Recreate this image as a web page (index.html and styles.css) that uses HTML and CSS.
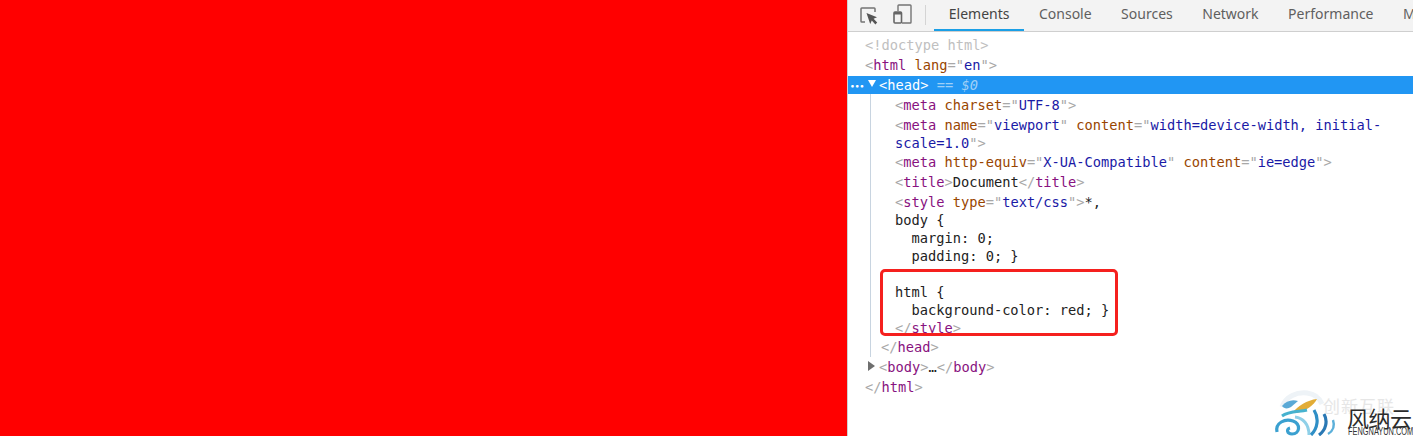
FILE: index.html
```html
<!DOCTYPE html>
<html lang="en">
<head>
<meta charset="UTF-8">
<title>Document</title>
<link rel="stylesheet" href="styles.css">
</head>
<body>
<main class="viewport"></main>
<section class="devtools">
  <header class="toolbar">
    <div class="tool-icons">
      <svg class="icon-inspect" width="18" height="18" viewBox="0 0 18 18" fill="none"><path d="M5 15H1.8Q1 15 1 14.2V1.8Q1 1 1.8 1H14.2Q15 1 15 1.8V5" stroke="#747474" stroke-width="1.5"/><path d="M6.5 6L17 10.2L13.6 11.8L17.2 15.6L15.4 17.4L11.8 13.6L10.2 17Z" fill="#555"/></svg>
      <svg class="icon-device" width="19" height="20" viewBox="0 0 19 20" fill="none"><path d="M5 7V1.8Q5 1 5.8 1H17.2Q18 1 18 1.8V18.2Q18 19 17.2 19H9" stroke="#747474" stroke-width="1.4"/><rect x="1" y="8" width="7.5" height="11" rx="1" stroke="#666" stroke-width="1.6"/><rect x="1" y="8" width="7.5" height="2.5" fill="#666"/></svg>
    </div>
    <span class="divider"></span>
    <nav class="tabs">
      <span class="tab active">Elements</span>
      <span class="tab">Console</span>
      <span class="tab">Sources</span>
      <span class="tab">Network</span>
      <span class="tab">Performance</span>
      <span class="tab">Memory</span>
    </nav>
  </header>
  <div class="tree">
    <div class="guide"></div>
    <pre class="node root doctype">&lt;!doctype html&gt;</pre>
    <pre class="node root"><b>&lt;</b><i>html</i> <u>lang</u><b>=</b><b>"</b><s>en</s><b>"</b><b>&gt;</b></pre>
    <div class="node selected"><span class="dots">•••</span><span class="arrow-down"></span><pre class="selected-text">&lt;head&gt;<em> == $0</em></pre></div>
    <pre class="node child"><b>&lt;</b><i>meta</i> <u>charset</u><b>="</b><s>UTF-8</s><b>"&gt;</b></pre>
    <pre class="node child tight"><b>&lt;</b><i>meta</i> <u>name</u><b>="</b><s>viewport</s><b>"</b> <u>content</u><b>="</b><s>width=device-width, initial-</s>
<s>scale=1.0</s><b>"&gt;</b></pre>
    <pre class="node child"><b>&lt;</b><i>meta</i> <u>http-equiv</u><b>="</b><s>X-UA-Compatible</s><b>"</b> <u>content</u><b>="</b><s>ie=edge</s><b>"&gt;</b></pre>
    <pre class="node child"><b>&lt;</b><i>title</i><b>&gt;</b>Document<b>&lt;/</b><i>title</i><b>&gt;</b></pre>
    <pre class="node child tight"><b>&lt;</b><i>style</i> <u>type</u><b>="</b><s>text/css</s><b>"&gt;</b>*,
body {
  margin: 0;
  padding: 0; }

html {
  background-color: red; }
<b>&lt;/</b><i>style</i><b>&gt;</b></pre>
    <pre class="node parent-close"><b>&lt;/</b><i>head</i><b>&gt;</b></pre>
    <div class="node collapsed"><span class="arrow-right"></span><pre><b>&lt;</b><i>body</i><b>&gt;</b>…<b>&lt;/</b><i>body</i><b>&gt;</b></pre></div>
    <pre class="node root"><b>&lt;/</b><i>html</i><b>&gt;</b></pre>
  </div>
  <div class="highlight-box"></div>
  <div class="watermark">
    <svg class="wm-logo" width="70" height="46" viewBox="0 0 70 46" fill="none">
      <path d="M9 17C13 6 24 2 34 3C42 4 47 9 49 14" stroke="#eef3f7" stroke-width="5"/>
      <path d="M9 16C13 11 19 9 25 11L18 17C15 19 11 19 9 16Z" fill="#5aa9d6"/>
      <path d="M19 23C25 16 34 10 44 9C41 15 33 21 24 23Z" fill="#e2ac36"/>
      <path d="M9 26C16 21 26 22 34 20" stroke="#46b2cf" stroke-width="3"/>
      <path d="M4 42C2 33 12 28 20 31C28 34 27 44 19 44C14 44 13 39 17 38" stroke="#3aa0d0" stroke-width="3.2"/>
      <path d="M22 27C30 28 36 34 36 45" stroke="#8fd0e8" stroke-width="3"/>
      <path d="M41 20C46 28 45 38 38 45" stroke="#2f8fc6" stroke-width="3.2"/>
      <path d="M51 24C55 31 53 40 46 45" stroke="#2a78b4" stroke-width="3.2"/>
      <path d="M60 30C62 36 60 41 55 44" stroke="#5cb0da" stroke-width="2.4"/>
    </svg>
    <div class="wm-text">
      <span class="wm-faint">创新互联</span>
      <span class="wm-cn">风纳云</span>
      <span class="wm-en">FENGNAYUN.COM</span>
    </div>
  </div>
</section>
</body>
</html>
```
FILE: styles.css
```css
* { box-sizing: border-box; }
html, body { margin: 0; height: 100%; }
body { display: flex; height: 436px; overflow: hidden; background: #fff; }
.viewport { flex: 0 0 847px; background: #ff0000; }
.devtools { flex: 1; position: relative; min-width: 0; overflow: hidden; border-left: 1px solid #d0d0d0; background: #fff; }
.toolbar { display: flex; align-items: stretch; height: 32px; background: #f3f3f3; border-bottom: 1px solid #cfcfcf; overflow: hidden; }
.tool-icons { display: flex; flex: none; gap: 17px; align-items: flex-start; padding-left: 12px; width: 77px; }
.icon-inspect { margin-top: 7px; flex: none; }
.icon-device { margin-top: 4px; flex: none; margin-left: -2px; }
.divider { flex: none; width: 1px; height: 20px; margin-top: 5px; background: #d4d4d4; }
.tabs { display: flex; flex: none; margin-left: 8px; font: 14px/28px "Noto Sans", sans-serif; color: #5f5f5f; white-space: nowrap; }
.tab { padding: 0 14.75px; height: 32px; }
.tab.active { color: #444; border-bottom: 3px solid #1a9fe6; }
.tree { position: relative; padding-top: 4px; font: 13.7px/18px "DejaVu Sans Mono", monospace; color: #222; }
.guide { position: absolute; left: 22px; top: 62px; height: 263px; width: 1px; background: #c8d4e0; }
pre { margin: 0; font: inherit; }
.node { margin: 0 0 2px; white-space: pre; }
.node.tight { margin-bottom: 1px; }
.root { padding-left: 17px; }
.child { padding-left: 47px; }
.parent-close { padding-left: 33px; }
.doctype { color: #c0c0c0; }
.node b { font-weight: 400; color: #a8a8a8; }
.node i { font-style: normal; color: #881280; }
.node u { text-decoration: none; color: #994500; }
.node s { text-decoration: none; color: #1a1aa6; }
.selected { display: flex; align-items: center; height: 18px; background: #2196f3; color: #fff; }
.dots { width: 20px; padding-left: 2px; font: 700 7.5px/8px "DejaVu Sans", sans-serif; margin-top: 3px; }
.arrow-down { width: 0; height: 0; margin-right: 3px; margin-top: -3px; border-left: 4.5px solid transparent; border-right: 4.5px solid transparent; border-top: 7px solid #fff; }
.selected-text em { color: #9fd0f7; }
.collapsed { display: flex; padding-left: 20px; }
.arrow-right { width: 0; height: 0; margin: 3px 4px 0 0; border-top: 5px solid transparent; border-bottom: 5px solid transparent; border-left: 7px solid #6e6e6e; }
.highlight-box { position: absolute; left: 32px; top: 269px; width: 238px; height: 67px; border: 3.5px solid #f5201e; border-radius: 5px; }
.watermark { position: absolute; right: 0; bottom: 0; width: 140px; height: 46px; display: flex; overflow: hidden; }
.wm-logo { flex: none; }
.wm-text { position: relative; flex: 1; }
.wm-faint { position: absolute; left: -20px; top: 7px; font: 17px/18px "Noto Sans CJK SC", sans-serif; letter-spacing: 1px; color: #e6e6e6; white-space: nowrap; }
.wm-cn { position: absolute; left: 4px; top: 14px; font: 22px/27px "Noto Sans CJK SC", sans-serif; letter-spacing: -0.5px; color: #2b2b2b; white-space: nowrap; }
.wm-en { position: absolute; left: 5px; top: 36px; font: 10px/12px "Liberation Sans", sans-serif; color: #333; white-space: nowrap; transform: scaleX(0.74); transform-origin: left center; }
```
